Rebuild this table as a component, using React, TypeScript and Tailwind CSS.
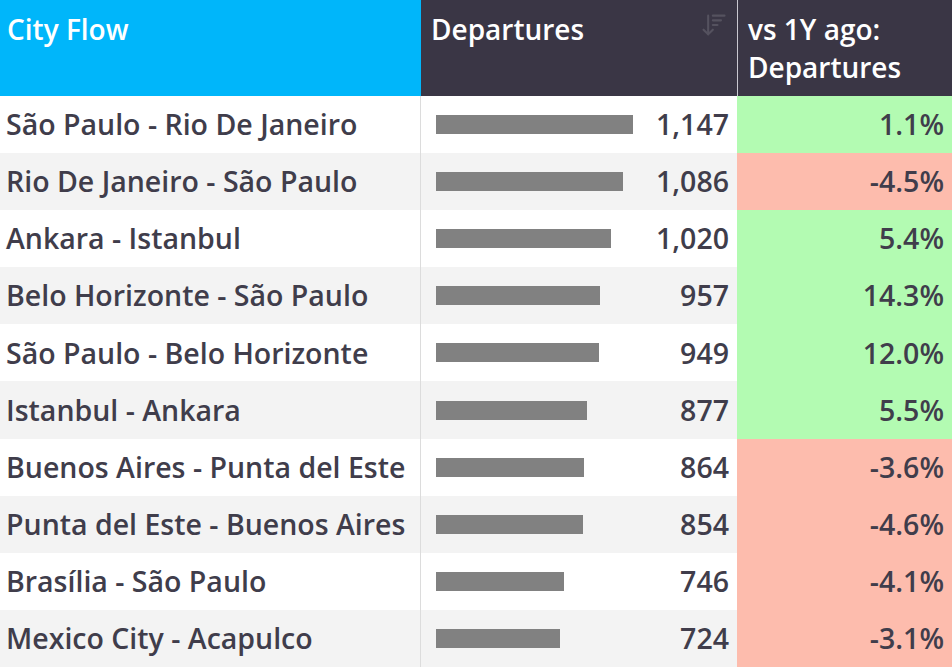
import { ArrowDownWideNarrow } from "lucide-react";

type Row = { flow: string; departures: number; change: number };

const rows: Row[] = [
  { flow: "São Paulo - Rio De Janeiro", departures: 1147, change: 1.1 },
  { flow: "Rio De Janeiro - São Paulo", departures: 1086, change: -4.5 },
  { flow: "Ankara - Istanbul", departures: 1020, change: 5.4 },
  { flow: "Belo Horizonte - São Paulo", departures: 957, change: 14.3 },
  { flow: "São Paulo - Belo Horizonte", departures: 949, change: 12.0 },
  { flow: "Istanbul - Ankara", departures: 877, change: 5.5 },
  { flow: "Buenos Aires - Punta del Este", departures: 864, change: -3.6 },
  { flow: "Punta del Este - Buenos Aires", departures: 854, change: -4.6 },
  { flow: "Brasília - São Paulo", departures: 746, change: -4.1 },
  { flow: "Mexico City - Acapulco", departures: 724, change: -3.1 },
];

const max = 1147;

export default function App() {
  return (
    <div
      className="w-[952px] h-[667px] overflow-hidden bg-white text-[#403d4b]"
      style={{ fontFamily: '"Open Sans", "Liberation Sans", sans-serif' }}
    >
      {/* Header */}
      <div className="flex h-[96px] font-semibold text-[28px] leading-[38px] text-white">
        <div className="w-[421px] bg-[#00b6fa] px-[7px] pt-[10px]">City Flow</div>
        <div className="w-[316px] bg-[#3a3645] pl-[10px] pr-[9px] pt-[10px] flex justify-between">
          <span>Departures</span>
          <ArrowDownWideNarrow className="w-[28px] h-[28px] mt-[1px] text-[#55525f]" strokeWidth={1.8} />
        </div>
        <div className="flex-1 bg-[#3a3645] border-l border-[#c9c8d0] pl-[10px] pt-[10px]">
          vs 1Y ago:
          <br />
          Departures
        </div>
      </div>

      {/* Body */}
      {rows.map((r, i) => (
        <div
          key={r.flow}
          className={`flex h-[57.1px] text-[28.5px] font-semibold items-center ${i % 2 === 1 ? "bg-[#f3f3f3]" : "bg-white"}`}
        >
          <div className="w-[421px] px-[6px] whitespace-nowrap border-r border-[#dcdcdc] h-full flex items-center">
            {r.flow}
          </div>
          <div className="w-[316px] h-full flex items-center pl-[15px] pr-[8px]">
            <div className="flex-1">
              <div
                className="h-[19px] bg-[#818181]"
                style={{ width: `${(r.departures / max) * 197}px` }}
              />
            </div>
            <span>{r.departures.toLocaleString("en-US")}</span>
          </div>
          <div
            className={`flex-1 h-full flex items-center justify-end pr-[8px] ${r.change >= 0 ? "bg-[#b3fbb2]" : "bg-[#fdbcad]"}`}
          >
            {r.change.toFixed(1)}%
          </div>
        </div>
      ))}
    </div>
  );
}
